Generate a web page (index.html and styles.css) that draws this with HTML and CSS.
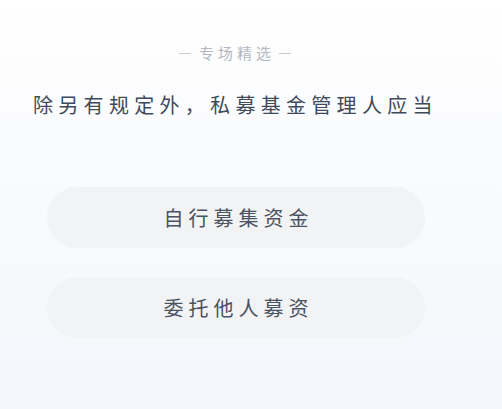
FILE: index.html
```html
<!DOCTYPE html>
<html lang="zh">
<head>
<meta charset="utf-8">
<link rel="stylesheet" href="styles.css">
</head>
<body>
<div class="page">
  <div class="tag"><span class="dash"></span><span class="tag-text">专场精选</span><span class="dash"></span></div>
  <div class="question">除另有规定外，私募基金管理人应当</div>
  <div class="options">
    <div class="option">自行募集资金</div>
    <div class="option">委托他人募资</div>
  </div>
</div>
</body>
</html>
```
FILE: styles.css
```css
html, body {
  margin: 0;
  padding: 0;
}
body {
  width: 502px;
  height: 409px;
  overflow: hidden;
  background: linear-gradient(180deg, #ffffff 0%, #fafbfd 35%, #f3f7fb 100%);
  font-family: "Noto Sans CJK SC", "Noto Sans", sans-serif;
}
.page {
  display: flex;
  flex-direction: column;
  padding-top: 42px;
}
.tag {
  display: flex;
  align-items: center;
  justify-content: center;
  gap: 8px;
  margin-left: -32px;
  color: #b4b8be;
  font-size: 15px;
  line-height: 22px;
  height: 22px;
}
.tag-text {
  letter-spacing: 4px;
  margin-right: -4px;
}
.dash {
  width: 12px;
  height: 1px;
  background: #c8ccd2;
}
.question {
  margin-top: 27px;
  padding-left: 33px;
  font-size: 20px;
  line-height: 28px;
  letter-spacing: 5.3px;
  color: #3f4a5a;
  white-space: nowrap;
}
.options {
  display: flex;
  flex-direction: column;
  gap: 29px;
  margin-top: 68px;
  padding-left: 47px;
  width: 378px;
}
.option {
  height: 61px;
  border-radius: 31px;
  background: #f1f3f5;
  display: flex;
  align-items: center;
  justify-content: center;
  font-size: 20px;
  letter-spacing: 5px;
  text-indent: 5px;
  color: #4b5260;
}
```
